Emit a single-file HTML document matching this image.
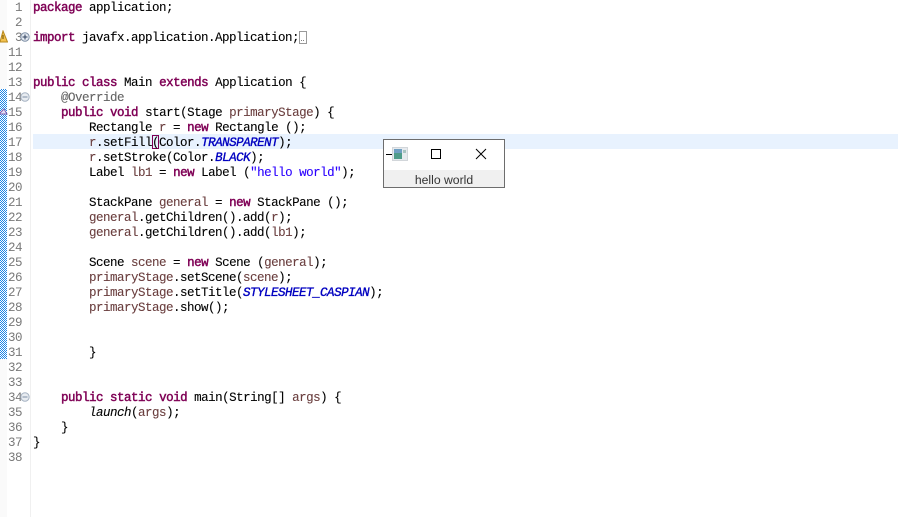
<!DOCTYPE html>
<html><head><meta charset="utf-8">
<style>
html,body{margin:0;padding:0;background:#fff}
body{width:898px;height:517px;position:relative;overflow:hidden}
.l{position:absolute;left:33px;height:15px;margin-top:2px;font:12.5px/15px "Liberation Mono",monospace;letter-spacing:-0.5px;white-space:pre;color:#000;-webkit-text-stroke:0.1px currentColor}
.n{position:absolute;left:7px;width:15px;margin-top:2px;text-align:right;font:12.5px/15px "Liberation Mono",monospace;letter-spacing:-0.5px;color:#787878;white-space:pre}
b{color:#7f0055;font-weight:normal;-webkit-text-stroke:0.45px #7f0055}
.v{color:#6a3e3e}
.c{color:#0000c0;font-style:italic;font-weight:normal;-webkit-text-stroke:0.35px #0000c0}
.s{color:#2a00ff}
.a{color:#646464}
i{font-style:italic}
</style></head><body>
<div style="position:absolute;left:0;top:0;width:7px;height:517px;background:#fafafa"></div>
<div style="position:absolute;left:30px;top:0;width:1px;height:517px;background:#f0f0f0"></div>
<div style="position:absolute;left:0;top:89px;width:7px;height:270px;background:repeating-conic-gradient(#1f86e6 0 25%,#fff 0 50%) 0 0/2px 2px"></div>
<div style="position:absolute;left:33px;top:134px;width:865px;height:15px;background:#e8f2fe"></div>
<div style="position:absolute;left:152px;top:135px;width:5px;height:12px;border:1px solid #7f0055"></div>
<div style="position:absolute;left:299px;top:31px;width:6px;height:11px;border:1px solid #9a9a9a"></div>
<div style="position:absolute;left:301px;top:40px;width:1px;height:1px;background:#808080"></div>
<div style="position:absolute;left:303px;top:40px;width:1px;height:1px;background:#808080"></div>

<div class="n" style="top:-1px">1</div><div class="n" style="top:14px">2</div><div class="n" style="top:29px">3</div>
<div class="n" style="top:44px">11</div><div class="n" style="top:59px">12</div><div class="n" style="top:74px">13</div>
<div class="n" style="top:89px">14</div><div class="n" style="top:104px">15</div><div class="n" style="top:119px">16</div>
<div class="n" style="top:134px">17</div><div class="n" style="top:149px">18</div><div class="n" style="top:164px">19</div>
<div class="n" style="top:179px">20</div><div class="n" style="top:194px">21</div><div class="n" style="top:209px">22</div>
<div class="n" style="top:224px">23</div><div class="n" style="top:239px">24</div><div class="n" style="top:254px">25</div>
<div class="n" style="top:269px">26</div><div class="n" style="top:284px">27</div><div class="n" style="top:299px">28</div>
<div class="n" style="top:314px">29</div><div class="n" style="top:329px">30</div><div class="n" style="top:344px">31</div>
<div class="n" style="top:359px">32</div><div class="n" style="top:374px">33</div><div class="n" style="top:389px">34</div>
<div class="n" style="top:404px">35</div><div class="n" style="top:419px">36</div><div class="n" style="top:434px">37</div>
<div class="n" style="top:449px">38</div>

<svg style="position:absolute;left:0;top:30px" width="8" height="14"><path d="M3 1 L7.5 12 L0 12 Z" fill="#f2c14e" stroke="#b98a1e" stroke-width="1"/><rect x="2.5" y="5" width="1" height="4" fill="#6b4a00"/></svg>
<svg style="position:absolute;left:20px;top:32px" width="10" height="10"><circle cx="5" cy="5" r="4.2" fill="#e4e9f0" stroke="#7d8ea5"/><path d="M2.5 5H7.5M5 2.5V7.5" stroke="#2d3f5e" stroke-width="1"/></svg>
<svg style="position:absolute;left:20px;top:92px" width="10" height="10"><circle cx="5" cy="5" r="4.2" fill="#e8ecf1" stroke="#a5b2c2"/><path d="M2.5 5H7.5" stroke="#7d8ea5" stroke-width="1"/></svg>
<svg style="position:absolute;left:20px;top:392px" width="10" height="10"><circle cx="5" cy="5" r="4.2" fill="#e8ecf1" stroke="#a5b2c2"/><path d="M2.5 5H7.5" stroke="#7d8ea5" stroke-width="1"/></svg>
<svg style="position:absolute;left:0;top:107px" width="8" height="9"><path d="M0 6L4 2L7 7H0Z" fill="#e6dcf5" stroke="#7a5fb0"/></svg>

<div class="l" style="top:-1px"><b>package</b> application;</div>
<div class="l" style="top:29px"><b>import</b> javafx.application.Application;</div>
<div class="l" style="top:74px"><b>public</b> <b>class</b> Main <b>extends</b> Application {</div>
<div class="l" style="top:89px">    <span class="a">@Override</span></div>
<div class="l" style="top:104px">    <b>public</b> <b>void</b> start(Stage <span class="v">primaryStage</span>) {</div>
<div class="l" style="top:119px">        Rectangle <span class="v">r</span> = <b>new</b> Rectangle ();</div>
<div class="l" style="top:134px">        <span class="v">r</span>.setFill(Color.<span class="c">TRANSPARENT</span>);</div>
<div class="l" style="top:149px">        <span class="v">r</span>.setStroke(Color.<span class="c">BLACK</span>);</div>
<div class="l" style="top:164px">        Label <span class="v">lb1</span> = <b>new</b> Label (<span class="s">"hello world"</span>);</div>
<div class="l" style="top:194px">        StackPane <span class="v">general</span> = <b>new</b> StackPane ();</div>
<div class="l" style="top:209px">        <span class="v">general</span>.getChildren().add(<span class="v">r</span>);</div>
<div class="l" style="top:224px">        <span class="v">general</span>.getChildren().add(<span class="v">lb1</span>);</div>
<div class="l" style="top:254px">        Scene <span class="v">scene</span> = <b>new</b> Scene (<span class="v">general</span>);</div>
<div class="l" style="top:269px">        <span class="v">primaryStage</span>.setScene(<span class="v">scene</span>);</div>
<div class="l" style="top:284px">        <span class="v">primaryStage</span>.setTitle(<span class="c">STYLESHEET_CASPIAN</span>);</div>
<div class="l" style="top:299px">        <span class="v">primaryStage</span>.show();</div>
<div class="l" style="top:344px">        }</div>
<div class="l" style="top:389px">    <b>public</b> <b>static</b> <b>void</b> main(String[] <span class="v">args</span>) {</div>
<div class="l" style="top:404px">        <i>launch</i>(<span class="v">args</span>);</div>
<div class="l" style="top:419px">    }</div>
<div class="l" style="top:434px">}</div>

<div style="position:absolute;left:383px;top:139px;width:120px;height:47px;border:1px solid #6d6d6d;background:#fff">
  <div style="position:absolute;left:0;top:30px;width:120px;height:17px;background:#f0f0f0;text-align:center;font:12.2px/20px 'Liberation Sans',sans-serif;color:#333;overflow:hidden">hello world</div>
  <div style="position:absolute;left:2px;top:14px;width:7px;height:1px;background:#000"></div>
  <svg style="position:absolute;left:8px;top:7px" width="16" height="14"><rect x="0.5" y="0.5" width="15" height="13" fill="#e6eaee" stroke="#d2d6da"/><rect x="2" y="2" width="8" height="10" fill="#4f9c8a"/><rect x="2" y="2" width="8" height="4" fill="#6f9fc2"/><rect x="11" y="3" width="3" height="3" fill="#a8c4c0"/></svg>
  <div style="position:absolute;left:47px;top:9px;width:8px;height:8px;border:1px solid #000"></div>
  <svg style="position:absolute;left:91px;top:8px" width="12" height="12"><path d="M1 1L11 11M11 1L1 11" stroke="#000" stroke-width="1" fill="none"/></svg>
</div>
</body></html>
